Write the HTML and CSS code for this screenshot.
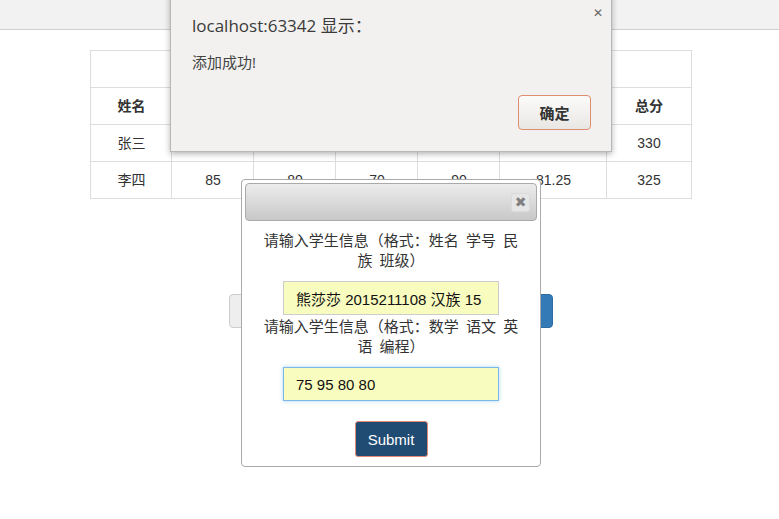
FILE: index.html
```html
<!DOCTYPE html>
<html lang="zh">
<head>
<meta charset="utf-8">
<title>学生成绩</title>
<link rel="stylesheet" href="styles.css">
</head>
<body>
<div class="topbar"></div>
<div class="wrap">
  <table class="grades">
    <colgroup>
      <col class="c1"><col class="c2"><col class="c2"><col class="c2"><col class="c2"><col class="c6"><col class="c7">
    </colgroup>
    <tr class="caption-row"><td colspan="7"></td></tr>
    <tr class="head"><th>姓名</th><th></th><th></th><th></th><th></th><th></th><th>总分</th></tr>
    <tr><td>张三</td><td></td><td></td><td></td><td></td><td></td><td>330</td></tr>
    <tr><td>李四</td><td>85</td><td>80</td><td>70</td><td>90</td><td>81.25</td><td>325</td></tr>
  </table>
</div>
<div class="actions">
  <button class="btn btn-default"></button>
  <button class="btn btn-primary"></button>
</div>

<div class="dialog">
  <div class="dialog-titlebar">
    <span class="dialog-close">&#x2716;</span>
  </div>
  <form class="dialog-content">
    <p class="prompt">请输入学生信息（格式：姓名 学号 民族 班级）</p>
    <input class="field" type="text" value="熊莎莎 2015211108 汉族 15">
    <p class="prompt prompt-tight">请输入学生信息（格式：数学 语文 英语 编程）</p>
    <input class="field field-focus" type="text" value="75 95 80 80">
    <button class="submit" type="button">Submit</button>
  </form>
</div>

<div class="alert">
  <span class="alert-close">&#x2715;</span>
  <div class="alert-title">localhost:63342 显示：</div>
  <div class="alert-msg">添加成功!</div>
  <div class="alert-actions"><button class="alert-ok">确定</button></div>
</div>
</body>
</html>
```

FILE: styles.css
```css
html, body {
  margin: 0;
  padding: 0;
  background: #fff;
  font-family: "Liberation Sans", Arial, "Noto Sans CJK SC", sans-serif;
  font-size: 14px;
  color: #333;
}

.topbar {
  height: 29px;
  background: #f2f2f2;
  border-bottom: 1px solid #d0d0d0;
}

.wrap {
  display: flex;
  justify-content: center;
  padding-left: 3px;
  margin-top: 20px;
}

.grades {
  border-collapse: collapse;
  width: 600px;
  table-layout: fixed;
}
.grades .c1 { width: 81px; }
.grades .c2 { width: 82px; }
.grades .c6 { width: 107px; }
.grades .c7 { width: 84px; }

.grades td, .grades th {
  border: 1px solid #ddd;
  height: 36px;
  padding: 0;
  text-align: center;
  vertical-align: middle;
  line-height: 20px;
}
.grades th { font-weight: bold; }

.actions {
  display: flex;
  justify-content: center;
  gap: 118px;
  margin-top: 95px;
  padding-left: 2px;
}
.btn {
  height: 34px;
  width: 103px;
  border-radius: 4px;
  font-family: inherit;
  font-size: 14px;
  border: 1px solid #ccc;
}
.btn-default { background: #eee; color: #333; }
.btn-primary { background: #337ab7; border-color: #2e6da4; color: #fff; }

/* jQuery UI style dialog */
.dialog {
  position: absolute;
  left: 241px;
  top: 179px;
  width: 292px;
  height: 280px;
  background: #fff;
  border: 1px solid #aaa;
  border-radius: 4px;
  padding: 3px;
  display: flex;
  flex-direction: column;
}
.dialog-titlebar {
  height: 36px;
  border: 1px solid #aaa;
  border-radius: 4px;
  background: linear-gradient(#ececec, #c8c8c8);
  display: flex;
  align-items: center;
  justify-content: flex-end;
  padding-right: 6px;
}
.dialog-close {
  width: 19px;
  height: 19px;
  border-radius: 3px;
  background: #e6e6e6;
  border: 1px solid #dadada;
  box-sizing: border-box;
  color: #808080;
  font-size: 14px;
  font-weight: bold;
  line-height: 17px;
  text-align: center;
  font-family: "DejaVu Sans", sans-serif;
}
.dialog-content {
  display: flex;
  flex-direction: column;
  align-items: center;
  margin: 0;
  padding: 10px 14px 0;
}
.prompt {
  margin: 0;
  width: 262px;
  text-align: center;
  font-family: "Liberation Sans", "Noto Sans CJK SC", sans-serif;
  font-size: 15px;
  line-height: 20px;
  word-spacing: 3px;
  color: #333;
}
.prompt-tight { margin-top: 2px; }

.field {
  box-sizing: border-box;
  width: 216px;
  height: 34px;
  margin-top: 10px;
  padding: 0 12px;
  background: #f9fcbf;
  border: 1px solid #ccc;
  font-family: "Liberation Sans", "Noto Sans CJK SC", sans-serif;
  font-size: 15px;
  color: #111;
  outline: none;
}
.field-focus {
  border-color: #7ab6e8;
  box-shadow: 0 0 4px rgba(102, 175, 233, 0.5);
}
.submit {
  margin-top: 20px;
  width: 73px;
  height: 36px;
  background: #204b72;
  border: 1px solid #e28a76;
  border-radius: 3px;
  color: #fff;
  font-family: "Liberation Sans", sans-serif;
  font-size: 15px;
}

/* browser alert */
.alert {
  position: absolute;
  left: 170px;
  top: -10px;
  width: 442px;
  height: 162px;
  box-sizing: border-box;
  background: #f2f1ef;
  border: 1px solid #b7b7b7;
  box-shadow: 0 2px 6px rgba(0, 0, 0, 0.3);
  padding: 23px 20px 0 21px;
  display: flex;
  flex-direction: column;
}
.alert-close {
  position: absolute;
  right: 8px;
  top: 15px;
  font-family: "DejaVu Sans", sans-serif;
  font-size: 12px;
  font-weight: bold;
  color: #666;
}
.alert-title {
  font-family: "Open Sans", "Noto Sans CJK SC", sans-serif;
  font-size: 17px;
  line-height: 24px;
  color: #3a3a3a;
}
.alert-msg {
  margin-top: 14px;
  font-family: "Open Sans", "Noto Sans CJK SC", sans-serif;
  font-size: 15px;
  line-height: 20px;
  color: #444;
}
.alert-actions {
  display: flex;
  justify-content: flex-end;
  margin-top: 23px;
}
.alert-ok {
  width: 73px;
  height: 35px;
  border: 1px solid #df8d6c;
  border-radius: 4px;
  background: linear-gradient(#fbfbfa, #e9e7e4);
  font-family: "Noto Sans CJK SC", sans-serif;
  font-weight: bold;
  font-size: 15px;
  color: #333;
}
```
